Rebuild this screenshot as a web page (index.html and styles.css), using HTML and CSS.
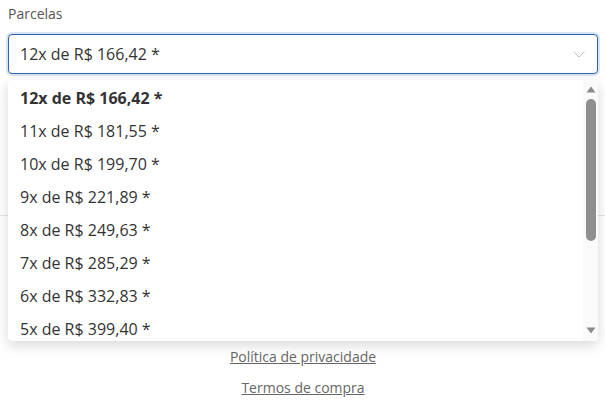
FILE: index.html
```html
<!DOCTYPE html>
<html lang="pt-BR">
<head>
<meta charset="utf-8">
<link rel="stylesheet" href="styles.css">
</head>
<body>
<div class="field">
  <div class="label">Parcelas</div>
  <div class="select-wrap">
    <div class="select">
      <span class="value">12x de R$ 166,42 *</span>
      <svg class="chev" width="12" height="7" viewBox="0 0 12 7"><path d="M0.5 0.5 L6 6 L11.5 0.5" fill="none" stroke="#bdbdbd" stroke-width="1"/></svg>
    </div>
    <div class="dropdown">
      <ul class="options">
        <li class="opt selected">12x de R$ 166,42 *</li>
        <li class="opt">11x de R$ 181,55 *</li>
        <li class="opt">10x de R$ 199,70 *</li>
        <li class="opt">9x de R$ 221,89 *</li>
        <li class="opt">8x de R$ 249,63 *</li>
        <li class="opt">7x de R$ 285,29 *</li>
        <li class="opt">6x de R$ 332,83 *</li>
        <li class="opt">5x de R$ 399,40 *</li>
        <li class="opt">4x de R$ 499,25 *</li>
        <li class="opt">3x de R$ 665,67 *</li>
        <li class="opt">2x de R$ 998,50 *</li>
        <li class="opt">1x de R$ 1.997,00 *</li>
      </ul>
      <div class="scrollbar">
        <svg class="arrow" width="10" height="7" viewBox="0 0 10 7"><path d="M5 0.5 L9.5 6.5 L0.5 6.5 Z" fill="#8a8a8a"/></svg>
        <div class="track"><div class="thumb"></div></div>
        <svg class="arrow" width="10" height="7" viewBox="0 0 10 7"><path d="M0.5 0.5 L9.5 0.5 L5 6.5 Z" fill="#8a8a8a"/></svg>
      </div>
    </div>
  </div>
</div>
<div class="page">
  <div class="divider"></div>
  <div class="links">
    <a href="#" class="link">Política de privacidade</a>
    <a href="#" class="link">Termos de compra</a>
  </div>
</div>
</body>
</html>
```

FILE: styles.css
```css
html, body {
  margin: 0;
  padding: 0;
  background: #ffffff;
}
body {
  font-family: "Open Sans", "Noto Sans", sans-serif;
  color: #444;
  padding: 4px 7px 0 8px;
}
.label {
  font-size: 14px;
  line-height: 20px;
  color: #555;
  margin-bottom: 10px;
}
.select-wrap {
  position: relative;
}
.select {
  height: 40px;
  box-sizing: border-box;
  border: 1px solid #2d62b5;
  border-radius: 4px;
  box-shadow: 0 0 0 2px rgba(45, 98, 181, 0.18);
  display: flex;
  align-items: center;
  justify-content: space-between;
  padding: 0 12px 0 11px;
  background: #fff;
}
.value {
  font-size: 16px;
  color: #333;
}
.chev {
  display: block;
  margin-top: 1px;
}
.dropdown {
  position: absolute;
  top: 46px;
  left: 0;
  right: 0;
  height: 261px;
  background: #fff;
  border-radius: 4px;
  box-shadow: 0 4px 14px rgba(0, 0, 0, 0.16);
  overflow: hidden;
  z-index: 2;
  display: flex;
}
.options {
  flex: 1;
  margin: 0;
  padding: 2px 0 0 0;
  list-style: none;
}
.opt {
  height: 33px;
  line-height: 33px;
  padding-left: 12px;
  font-size: 16px;
  color: #333;
}
.selected {
  font-weight: 700;
}
.scrollbar {
  width: 15px;
  background: #fafafa;
  display: flex;
  flex-direction: column;
  align-items: center;
  padding: 6px 0 7px 0;
  box-sizing: border-box;
}
.arrow {
  display: block;
  flex: none;
}
.track {
  flex: 1;
  width: 10px;
  padding: 6px 0;
}
.thumb {
  height: 142px;
  width: 10px;
  border-radius: 5px;
  background: #8f8f8f;
}
.page {
  display: flex;
  flex-direction: column;
}
.divider {
  height: 1px;
  background: #e6e6e6;
  margin: 141px -8px 0 -8px;
}
.links {
  display: flex;
  flex-direction: column;
  align-items: center;
  margin-top: 131px;
  gap: 11px;
}
.link {
  font-size: 14px;
  line-height: 20px;
  color: #666;
  text-decoration: underline;
}
```
